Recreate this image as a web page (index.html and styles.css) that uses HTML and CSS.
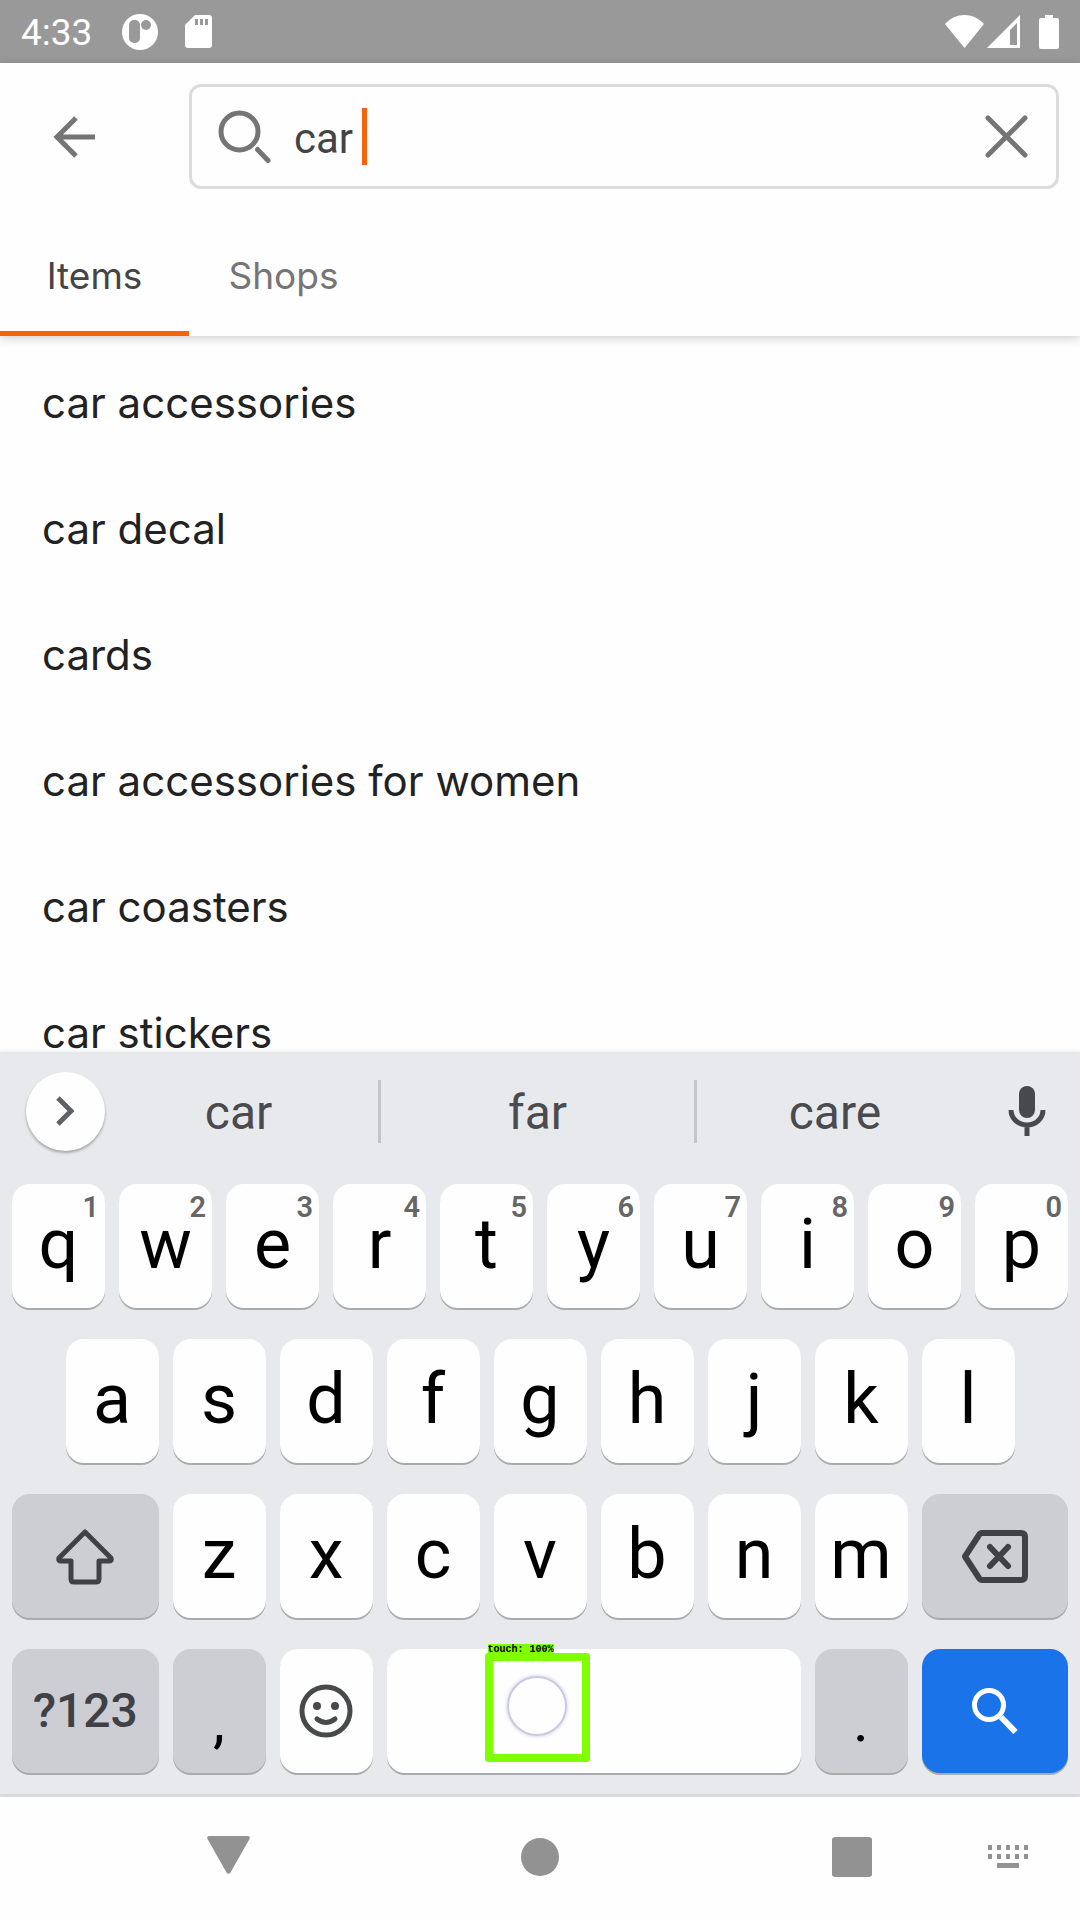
FILE: index.html
```html
<!DOCTYPE html>
<html lang="en">
<head>
<meta charset="utf-8">
<meta name="viewport" content="width=device-width, initial-scale=1">
<title>Search</title>
<link rel="stylesheet" href="styles.css">
</head>
<body>
<div class="status">
  <span class="clock">4:33</span>
  <svg class="status-app" width="36" height="36" viewBox="0 0 36 36"><circle cx="18" cy="18" r="18" fill="#fff"/><rect x="7" y="6" width="11" height="23" rx="5" fill="#999"/><circle cx="24" cy="11" r="5" fill="#999"/></svg>
  <svg class="status-card" width="27" height="33" viewBox="0 0 27 33"><path fill="#fff" d="M10 0H24a3 3 0 0 1 3 3V30a3 3 0 0 1-3 3H3a3 3 0 0 1-3-3V10Z"/><path fill="#999" d="M10 4h3v6h-3zM15 4h3v6h-3zM20 4h3v6h-3z"/></svg>
  <span class="spacer"></span>
  <svg width="39" height="33" viewBox="0 0 39 33"><path fill="#fff" d="M0 9C11-3 28-3 39 9L19.500 33Z"/></svg>
  <svg class="status-signal" width="33" height="33" viewBox="0 0 33 33"><path fill="#fff" fill-rule="evenodd" d="M33 0V33H0ZM30 8L23 15V30H30Z"/></svg>
  <svg class="status-battery" width="20" height="34" viewBox="0 0 20 34"><path fill="#fff" d="M6 0h8v3h4a2 2 0 0 1 2 2v27a2 2 0 0 1-2 2H2a2 2 0 0 1-2-2V5a2 2 0 0 1 2-2h4z"/></svg>
</div>

<header class="header">
  <div class="search-row">
    <button class="icon-button back" aria-label="Back"><svg width="42" height="42" viewBox="0 0 42 42" fill="none" stroke="#757575" stroke-width="5"><path d="M23 2L4 21L23 40M4 21H42"/></svg></button>
    <div class="field">
      <svg width="54" height="54" viewBox="0 0 54 54" fill="none" stroke="#757575" stroke-width="5"><circle cx="21.500" cy="21.500" r="18.500"/><path stroke-linecap="round" d="M39.500 39.500L50 50.500"/></svg>
      <div class="entry">
        <input type="text" value="car " aria-label="Search for items">
        <span class="caret"></span>
      </div>
      <button class="icon-button clear" aria-label="Clear"><svg width="43" height="43" viewBox="0 0 43 43" stroke="#757575" stroke-width="5" stroke-linecap="round"><path d="M3 3L40 40M40 3L3 40"/></svg></button>
    </div>
  </div>
  <nav class="tabs">
    <a class="tab active" href="#items">Items</a>
    <a class="tab" href="#shops">Shops</a>
  </nav>
</header>

<main class="results" id="items">
  <ul>
    <li><a href="#r1">car accessories</a></li>
    <li><a href="#r2">car decal</a></li>
    <li><a href="#r3">cards</a></li>
    <li><a href="#r4">car accessories for women</a></li>
    <li><a href="#r5">car coasters</a></li>
    <li><a href="#r6">car stickers</a></li>
  </ul>
</main>

<section class="keyboard" aria-label="Keyboard">
  <div class="strip">
    <button class="expand" aria-label="More"><svg width="20" height="30" viewBox="0 0 20 30" fill="none" stroke="#5f6165" stroke-width="5"><path d="M2 2L15 15L2 28"/></svg></button>
    <button class="suggestion first">car</button>
    <button class="suggestion">far</button>
    <button class="suggestion last">care</button>
    <button class="icon-button" aria-label="Voice input"><svg width="38" height="50" viewBox="0 0 38 50"><rect x="11" y="0" width="16" height="32" rx="8" fill="#48494d"/><path d="M3 24a16 15 0 0 0 32 0M19 39V50" fill="none" stroke="#48494d" stroke-width="5"/></svg></button>
  </div>
  <div class="keys">
    <button class="key">q<span class="hint">1</span></button>
    <button class="key">w<span class="hint">2</span></button>
    <button class="key">e<span class="hint">3</span></button>
    <button class="key">r<span class="hint">4</span></button>
    <button class="key">t<span class="hint">5</span></button>
    <button class="key">y<span class="hint">6</span></button>
    <button class="key">u<span class="hint">7</span></button>
    <button class="key">i<span class="hint">8</span></button>
    <button class="key">o<span class="hint">9</span></button>
    <button class="key">p<span class="hint">0</span></button>

    <button class="key indent">a</button>
    <button class="key">s</button>
    <button class="key">d</button>
    <button class="key">f</button>
    <button class="key">g</button>
    <button class="key">h</button>
    <button class="key">j</button>
    <button class="key">k</button>
    <button class="key">l</button>

    <button class="key wide gray row-start" aria-label="Shift"><svg width="58" height="57" viewBox="0 0 58 57" fill="none" stroke="#3f4145" stroke-width="5" stroke-linejoin="round"><path d="M29 4L55 30Q56 33 53 33H43V51Q43 54 40 54H18Q15 54 15 51V33H5Q2 33 3 30Z"/></svg></button>
    <button class="key">z</button>
    <button class="key">x</button>
    <button class="key">c</button>
    <button class="key">v</button>
    <button class="key">b</button>
    <button class="key">n</button>
    <button class="key">m</button>
    <button class="key wide gray" aria-label="Backspace"><svg width="66" height="53" viewBox="0 0 66 53" fill="none" stroke="#3f4145" stroke-width="6" stroke-linejoin="round" stroke-linecap="round"><path d="M20 3H59Q63 3 63 7V46Q63 50 59 50H20Q18 50 17 48L3 26.500L17 5Q18 3 20 3Z"/><path d="M28 17L46 36M46 17L28 36"/></svg></button>

    <button class="key wide gray symbols">?123</button>
    <button class="key gray mark">,</button>
    <button class="key" aria-label="Emoji"><svg width="54" height="54" viewBox="0 0 54 54" fill="none" stroke="#48494b" stroke-width="5"><circle cx="27" cy="27" r="24"/><path stroke-linecap="round" d="M18 35Q27 42 36 35"/><g fill="#48494b" stroke="none"><circle cx="18" cy="22" r="4"/><circle cx="36" cy="22" r="4"/></g></svg></button>
    <div class="space">
      <button class="key" aria-label="Space"></button>
      <div class="touch"><span class="touch-label">touch: 100%</span><span class="touch-ring"></span></div>
    </div>
    <button class="key gray mark">.</button>
    <button class="key wide go" aria-label="Search"><svg width="46" height="46" viewBox="0 0 46 46" fill="none" stroke="#fff"><circle cx="17" cy="17" r="14.500" stroke-width="5"/><path stroke-width="6" d="M29 29L43.500 44"/></svg></button>
  </div>
</section>

<nav class="system">
  <button class="icon-button" aria-label="Hide keyboard"><svg width="43" height="42" viewBox="0 0 43 42"><path fill="#929292" d="M2 0H41Q43.500 0 42.500 3L23.500 36.500Q21.500 39 19.500 36.500L.5 3Q-.5 0 2 0Z"/></svg></button>
  <button class="icon-button" aria-label="Home"><svg width="38" height="38" viewBox="0 0 38 38"><circle cx="19" cy="19" r="19" fill="#929292"/></svg></button>
  <button class="icon-button" aria-label="Recent apps"><svg width="40" height="40" viewBox="0 0 40 40"><rect width="40" height="40" rx="3" fill="#929292"/></svg></button>
  <button class="icon-button" aria-label="Change keyboard"><svg width="40" height="23" viewBox="0 0 40 23"><path fill="#929292" d="M0 0h4v5H0zM9 0h4v5H9zM18 0h4v5h-4zM27 0h4v5h-4zM36 0h4v5h-4zM0 9h4v5H0zM9 9h4v5H9zM18 9h4v5h-4zM27 9h4v5h-4zM36 9h4v5h-4zM9 18h22v5H9z"/></svg></button>
</nav>
</body>
</html>
```
FILE: styles.css
```css
* { box-sizing: border-box; }

body {
  margin: 0;
  height: 100vh;
  display: flex;
  flex-direction: column;
  overflow: hidden;
  background: #fefefe;
  font-family: Roboto, "Liberation Sans", sans-serif;
}

svg { display: block; flex: none; }

button {
  border: 0;
  margin: 0;
  padding: 0;
  background: none;
  font: inherit;
  color: inherit;
}

.icon-button {
  display: flex;
  align-items: center;
  justify-content: center;
}

/* Status bar */
.status {
  display: flex;
  align-items: center;
  flex: none;
  height: 63px;
  padding: 0 21px;
  background: #999;
  color: #fff;
}

.clock {
  padding-top: 2px;
  font-size: 37px;
  line-height: 44px;
}

.status-app { margin-left: 30px; }
.status-card { margin-left: 27px; }
.spacer { flex: 1; }
.status-signal { margin-left: 3px; }
.status-battery { margin-left: 19px; }

/* Search header */
.header {
  flex: none;
  position: relative;
  box-shadow: 0 2px 10px rgba(0, 0, 0, .2);
  background: #fefefe;
}

.search-row {
  display: flex;
  gap: 42px;
  padding: 21px 21px 21px 0;
}

.back { width: 147px; }

.field {
  flex: 1;
  min-width: 0;
  display: flex;
  align-items: center;
  height: 105px;
  padding: 0 28px 0 26px;
  border: 3px solid #dcdcdc;
  border-radius: 12px;
}

.entry {
  position: relative;
  flex: 1;
  min-width: 0;
  margin: 0 20px 0 22px;
}

.entry input {
  display: block;
  width: 100%;
  height: 57px;
  padding: 4px 0 0;
  border: 0;
  outline: 0;
  background: none;
  font: 42px Roboto, "Liberation Sans", sans-serif;
  color: #444;
}

.caret {
  position: absolute;
  left: 68px;
  top: 0;
  width: 5px;
  height: 57px;
  background: #f4640c;
}

.tabs { display: flex; }

.tab {
  display: flex;
  align-items: center;
  justify-content: center;
  width: 189px;
  height: 126px;
  padding-top: 10px;
  border-bottom: 5px solid transparent;
  font: 37px Inter, sans-serif;
  color: #757575;
  text-decoration: none;
}

.tab.active {
  border-color: #f4640c;
  color: #444;
}

/* Suggested searches */
.results {
  flex: 1;
  min-height: 0;
  overflow: hidden;
}

.results ul {
  margin: 0;
  padding: 3px 0 0;
  list-style: none;
}

.results a {
  display: flex;
  align-items: center;
  height: 126px;
  padding: 0 42px;
  font: 42px Inter, sans-serif;
  color: #222;
  text-decoration: none;
}

/* On-screen keyboard */
.keyboard {
  flex: none;
  position: relative;
  background: #e8e9ed;
  box-shadow: 0 0 4px rgba(0, 0, 0, .1);
}

.strip {
  display: grid;
  grid-template-columns: 105px 276px 1fr 276px 107px;
  align-items: center;
  height: 118px;
}

.expand {
  display: flex;
  align-items: center;
  justify-content: center;
  width: 79px;
  height: 79px;
  margin-left: 26px;
  border-radius: 50%;
  background: #fefefe;
  box-shadow: 0 2px 3px rgba(0, 0, 0, .3);
}

.suggestion {
  height: 63px;
  padding-top: 4px;
  border-right: 3px solid #c4c5c9;
  font-size: 48px;
  line-height: 56px;
  color: #4a4b4f;
}

.suggestion.first { padding-right: 6px; }
.suggestion.last { border-right: 0; }

.keys {
  display: grid;
  grid-template-columns: repeat(20, 1fr);
  grid-auto-rows: 124px;
  gap: 31px 14px;
  padding: 14px 12px 21px;
}

.key {
  position: relative;
  grid-column: span 2;
  display: flex;
  align-items: center;
  justify-content: center;
  padding-bottom: 5px;
  border-radius: 18px;
  background: #fefefe;
  box-shadow: 0 2px 0 #a9aaad;
  font-size: 70px;
  line-height: 82px;
  color: #000;
}

.key:has(svg) { padding-bottom: 0; }
.key.indent { grid-column: 2 / span 2; }
.key.wide { grid-column: span 3; }
.key.row-start { grid-column: 1 / span 3; }
.key.gray { background: #ccced3; }
.key.go { background: #1a73e8; }

.key.symbols {
  padding: 0;
  font-size: 48px;
  font-weight: 500;
  color: #3f4145;
}

.key.mark {
  padding: 20px 0 0;
  font-size: 60px;
}

.hint {
  position: absolute;
  top: 7px;
  right: 6px;
  font-size: 29px;
  line-height: 32px;
  font-weight: 600;
  color: #666;
}

.space {
  position: relative;
  grid-column: span 8;
  display: grid;
}

.space .key { grid-column: 1; }

/* Touch marker */
.touch {
  position: absolute;
  left: 98px;
  top: 4px;
  width: 105px;
  height: 109px;
  display: flex;
  align-items: center;
  justify-content: center;
  padding-bottom: 4px;
  border: 8px solid #80ff00;
  border-radius: 3px;
}

.touch-label {
  position: absolute;
  left: -5px;
  top: -17px;
  background: #80ff00;
  font: bold 10px/12px "Liberation Mono", monospace;
  color: #000;
}

.touch-ring {
  width: 60px;
  height: 60px;
  border: 2px solid #c9c9e2;
  border-radius: 50%;
  box-shadow: 0 0 3px 1px #dcdcf2;
}

/* System navigation */
.system {
  flex: none;
  display: grid;
  grid-template-columns: 144px 168px 1fr 168px 144px;
  height: 126px;
  padding-bottom: 4px;
  border-top: 3px solid #dedfe0;
}

.system button:first-child { grid-column: 2; }
```
